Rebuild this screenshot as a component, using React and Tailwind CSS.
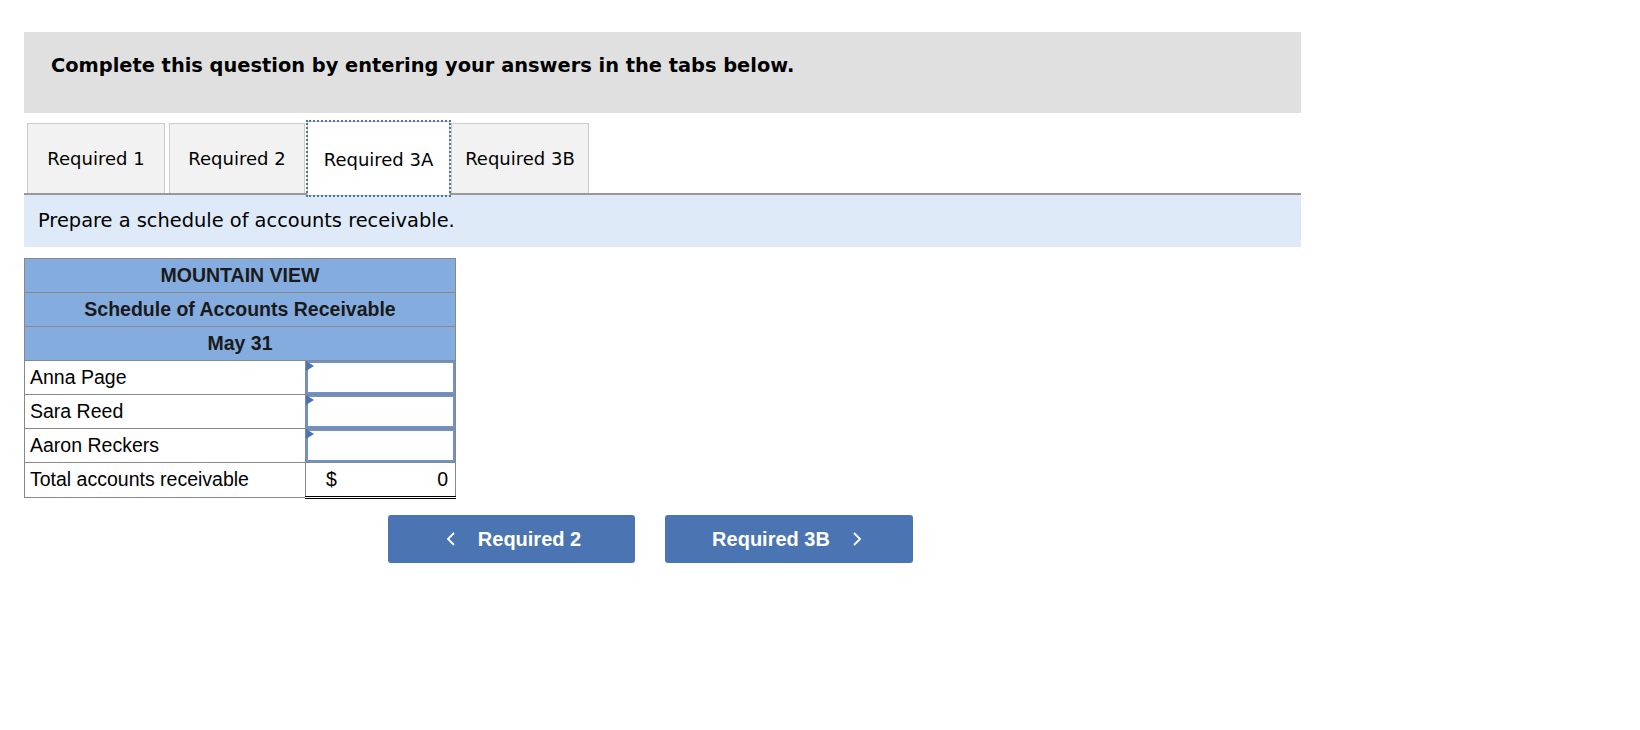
import React, { useState } from 'react';

const tabs = [
  { label: 'Required 1', w: 'w-[138px]', ml: 'ml-[3px]' },
  { label: 'Required 2', w: 'w-[136px]', ml: 'ml-[4px]' },
  { label: 'Required 3A', w: 'w-[143px]', ml: 'ml-[2px]' },
  { label: 'Required 3B', w: 'w-[138px]', ml: 'ml-[1px]' },
];
const customers = ['Anna Page', 'Sara Reed', 'Aaron Reckers'];

const verdana = { fontFamily: 'Verdana, "DejaVu Sans", sans-serif' };
const arial = { fontFamily: '"Liberation Sans", Arial, sans-serif' };

function InputCell() {
  return (
    <td className="relative h-[34px] w-[150px] border border-[#888] p-0">
      <div className="relative h-full w-full border-2 border-[#6f93c9] bg-white">
        <span className="absolute left-[-2px] top-[-2px] h-0 w-0 border-y-[5px] border-l-[8px] border-y-transparent border-l-[#4a74b4]" />
      </div>
    </td>
  );
}

export default function App() {
  const [active, setActive] = useState(2);

  return (
    <div className="min-h-screen bg-white pt-[32px] pl-[24px]" style={verdana}>
      <div className="w-[1277px]">
        <div className="flex h-[81px] items-center bg-[#e0e0e0] pl-[27px] pb-[14px]">
          <h2 className="text-[19.4px] font-bold text-black">
            Complete this question by entering your answers in the tabs below.
          </h2>
        </div>

        <div className="relative z-10 mt-[8px] flex items-end">
          {tabs.map((t, i) => (
            <button
              key={t.label}
              onClick={() => setActive(i)}
              className={
                i === active
                  ? `${t.w} ${t.ml} mb-[-3px] h-[75px] border border-[#ccc] bg-white pt-[1px] text-[18px] text-black outline-2 outline-dotted outline-[#4a74b4] -outline-offset-1`
                  : `${t.w} ${t.ml} h-[70px] border border-[#ccc] border-b-0 bg-[#f2f2f2] text-[18px] text-black`
              }
            >
              {t.label}
            </button>
          ))}
        </div>

        <div className="flex h-[54px] items-center border-t-2 border-[#999] bg-[#deeaf7] pl-[14px]">
          <p className="text-[19.4px] text-black">Prepare a schedule of accounts receivable.</p>
        </div>
      </div>

      <table className="mt-[11px] w-[432px] border-collapse text-[19.5px] text-black" style={arial}>
        <tbody>
          {['MOUNTAIN VIEW', 'Schedule of Accounts Receivable', 'May 31'].map((h) => (
            <tr key={h}>
              <td colSpan={2} className="h-[34px] border border-[#888] bg-[#85acdf] text-center font-bold text-[#1a1a1a]">
                {h}
              </td>
            </tr>
          ))}
          {customers.map((c) => (
            <tr key={c}>
              <td className="h-[34px] border border-[#888] pl-[5px]">{c}</td>
              <InputCell />
            </tr>
          ))}
          <tr>
            <td className="h-[35px] border border-[#888] pl-[5px]">Total accounts receivable</td>
            <td className="h-[35px] border-x border-[#888] border-b-[3px] border-b-black border-double p-0">
              <div className="flex justify-between pl-[20px] pr-[7px]">
                <span>$</span>
                <span>0</span>
              </div>
            </td>
          </tr>
        </tbody>
      </table>

      <div className="mt-[16px] flex gap-[30px] pl-[364px]" style={arial}>
        <button className="flex h-[48px] w-[247px] items-center justify-center gap-[22px] rounded-[3px] bg-[#4a74b2] pl-[4px] text-[20px] font-bold text-white">
          <svg width="10" height="16" viewBox="0 0 10 16" fill="none" stroke="white" strokeWidth="1.8">
            <path d="M8 2 L2 8 L8 14" />
          </svg>
          Required 2
        </button>
        <button className="flex h-[48px] w-[248px] items-center justify-center gap-[22px] rounded-[3px] bg-[#4a74b2] pr-[4px] text-[20px] font-bold text-white">
          Required 3B
          <svg width="10" height="16" viewBox="0 0 10 16" fill="none" stroke="white" strokeWidth="1.8">
            <path d="M2 2 L8 8 L2 14" />
          </svg>
        </button>
      </div>
    </div>
  );
}
